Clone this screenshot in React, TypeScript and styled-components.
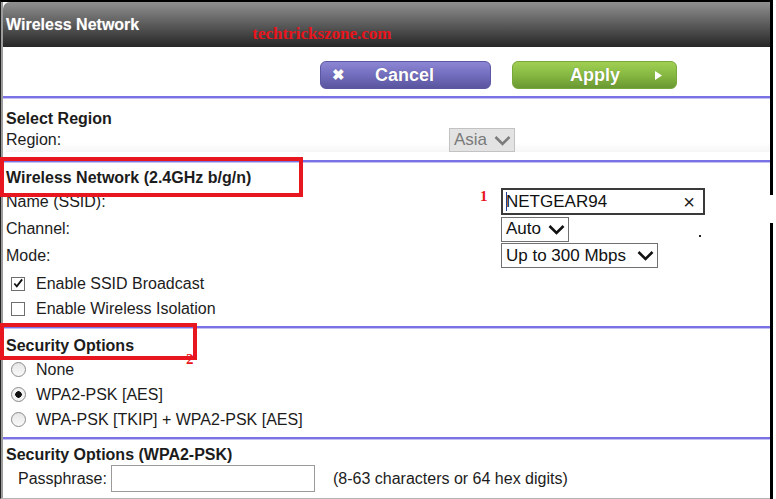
import styled, { createGlobalStyle } from "styled-components";

const GlobalStyle = createGlobalStyle`
  html, body {
    margin: 0;
    padding: 0;
    background: #ffffff;
  }
  body {
    font-family: "Liberation Sans", Arial, sans-serif;
    color: #1c1c1c;
  }
`;

const ChevronDown = ({ color = "#111" }: { color?: string }) => (
  <svg width="17" height="11" viewBox="0 0 17 11">
    <path d="M1.5 2 L8.5 9 L15.5 2" fill="none" stroke={color} strokeWidth="2.6" />
  </svg>
);

const CheckMark = () => (
  <svg width="13" height="13" viewBox="0 0 13 13">
    <path d="M2.5 6.5 L5.2 9.5 L11 2" fill="none" stroke="#111" strokeWidth="2" />
  </svg>
);

interface SelectBoxProps {
  value: string;
  disabled?: boolean;
  gap?: number;
}
const SelectBox = ({ value, disabled, gap = 7 }: SelectBoxProps) => (
  <Select $disabled={disabled} $gap={gap}>
    <span>{value}</span>
    <ChevronDown color={disabled ? "#7c7c7c" : "#111"} />
  </Select>
);

const App = () => {
  return (
    <Page>
      <GlobalStyle />
      <Frame>
        <TitleBar>
          <Title>Wireless Network</Title>
          <Watermark>techtrickszone.com</Watermark>
        </TitleBar>

        <ButtonRow>
          <CancelButton>
            <span className="icon">✖</span>
            <span>Cancel</span>
          </CancelButton>
          <ApplyButton>
            <span>Apply</span>
            <svg width="7" height="9" viewBox="0 0 7 9">
              <path d="M0 0 L7 4.5 L0 9 Z" fill="#fff" />
            </svg>
          </ApplyButton>
        </ButtonRow>
        <Divider />

        <Section $top={10} $bottom={8}>
          <Heading $shift={1}>Select Region</Heading>
          <RegionRow>
            <Label>Region:</Label>
            <SelectBox value="Asia" disabled />
          </RegionRow>
        </Section>
        <Divider />

        <Section $top={4} $bottom={5}>
          <Heading $height={22} $shift={1}>
            Wireless Network (2.4GHz b/g/n)
            <Callout $width={303} $height={40} $top={-9} />
            <Marker $left={474} $top={23}>1</Marker>
          </Heading>
          <FieldGrid>
            <Label>Name (SSID):</Label>
            <TextInput $width={204} $height={27} $dark>
              <Caret />
              <span>NETGEAR94</span>
              <ClearIcon>×</ClearIcon>
            </TextInput>
            <Label>Channel:</Label>
            <Control>
              <SelectBox value="Auto" />
              <Speck />
            </Control>
            <Label>Mode:</Label>
            <Control>
              <SelectBox value="Up to 300 Mbps" gap={11} />
            </Control>
          </FieldGrid>
          <OptionRow $top={3}>
            <CheckBox>
              <CheckMark />
            </CheckBox>
            Enable SSID Broadcast
          </OptionRow>
          <OptionRow>
            <CheckBox />
            Enable Wireless Isolation
          </OptionRow>
        </Section>
        <Divider />

        <Section $top={6} $bottom={5}>
          <Heading $height={22} $shift={1}>
            Security Options
            <Marker $left={180} $top={18}>2</Marker>
            <Callout $width={197} $height={37} $top={-11} />
          </Heading>
          <OptionRow $top={1}>
            <Radio />
            None
          </OptionRow>
          <OptionRow>
            <Radio $checked />
            WPA2-PSK [AES]
          </OptionRow>
          <OptionRow>
            <Radio />
            WPA-PSK [TKIP] + WPA2-PSK [AES]
          </OptionRow>
        </Section>
        <Divider />

        <Section $top={6} $bottom={5}>
          <Heading>Security Options (WPA2-PSK)</Heading>
          <PassRow>
            <span>Passphrase:</span>
            <TextInput $width={204} $height={27} />
            <Hint>(8-63 characters or 64 hex digits)</Hint>
          </PassRow>
        </Section>
      </Frame>
    </Page>
  );
};
export default App;

const Page = styled.div`
  width: 776px;
  height: 499px;
  box-sizing: border-box;
  overflow: hidden;
  padding-right: 3px;
  background:
    linear-gradient(#000, #000) right 3px top 0 / 3px 195px no-repeat,
    linear-gradient(#000, #000) right 3px top 223px / 3px 100% no-repeat,
    #fff;
`;

const Frame = styled.div`
  width: 770px;
  height: 499px;
  box-sizing: border-box;
  border-top: 2px solid #000;
  border-left: 1px solid #222;
  box-shadow: inset 2px 0 0 #9c9c9c;
  border-bottom: 1px solid #b5b5b5;
  margin-bottom: 1px;
  display: flex;
  flex-direction: column;
`;

const TitleBar = styled.div`
  height: 45px;
  margin-left: 2px;
  border-top-left-radius: 7px;
  background: linear-gradient(to bottom, #909090 0%, #606060 45%, #262626 100%);
  display: flex;
  align-items: flex-start;
  flex-shrink: 0;
`;

const Title = styled.div`
  color: #fff;
  font-weight: bold;
  font-size: 16px;
  line-height: 20px;
  padding: 13px 0 0 3px;
  text-shadow: 0 0 1px rgba(255, 255, 255, 0.4);
`;

const Watermark = styled.div`
  color: #e8141c;
  font-family: "Liberation Serif", "Times New Roman", serif;
  font-weight: bold;
  font-size: 17px;
  line-height: 20px;
  margin: 22px 0 0 113px;
`;

const ButtonRow = styled.div`
  height: 49px;
  box-sizing: border-box;
  padding: 14px 0 0 319px;
  display: flex;
  gap: 21px;
  flex-shrink: 0;
`;

const BaseButton = styled.div`
  height: 28px;
  box-sizing: border-box;
  border-radius: 6px;
  display: flex;
  align-items: center;
  color: #fff;
  font-weight: bold;
  font-size: 18px;
  text-shadow: 0 0 1px rgba(0, 0, 0, 0.3);
`;

const CancelButton = styled(BaseButton)`
  width: 171px;
  padding-left: 11px;
  gap: 30px;
  background: linear-gradient(to bottom, #8c86d4 0%, #736dbe 50%, #5a559e 100%);
  border: 1px solid #5c57a3;
  .icon {
    font-size: 15px;
  }
`;

const ApplyButton = styled(BaseButton)`
  width: 165px;
  padding-left: 57px;
  gap: 35px;
  background: linear-gradient(to bottom, #a0cf52 0%, #86b842 50%, #6a9832 100%);
  border: 1px solid #78a83a;
`;

const Divider = styled.div`
  height: 2px;
  margin-left: 2px;
  background: #7a72e4;
  box-shadow: 0 1px 0 #c4c0f2;
  flex-shrink: 0;
`;

const Section = styled.div<{ $top: number; $bottom: number }>`
  padding: ${(p) => p.$top}px 0 ${(p) => p.$bottom}px 5px;
  display: flex;
  flex-direction: column;
  flex-shrink: 0;
`;

const Heading = styled.div<{ $height?: number; $shift?: number }>`
  position: relative;
  font-weight: bold;
  font-size: 16px;
  height: ${(p) => p.$height ?? 20}px;
  line-height: ${(p) => (p.$height ?? 20) + 2 * (p.$shift ?? 0)}px;
`;

const Callout = styled.div<{ $width: number; $height: number; $top: number }>`
  position: absolute;
  left: -6px;
  top: ${(p) => p.$top}px;
  width: ${(p) => p.$width}px;
  height: ${(p) => p.$height}px;
  box-sizing: border-box;
  border: 4px solid #e8161f;
  pointer-events: none;
`;

const Marker = styled.span<{ $left: number; $top: number }>`
  position: absolute;
  left: ${(p) => p.$left}px;
  top: ${(p) => p.$top}px;
  color: #e8141c;
  font-family: "Liberation Serif", "Times New Roman", serif;
  font-weight: bold;
  font-size: 15px;
  line-height: 15px;
`;

const Label = styled.span`
  font-size: 16px;
  line-height: 20px;
`;

const RegionRow = styled.div`
  height: 24px;
  display: grid;
  grid-template-columns: 443px auto;
  align-items: center;
  background: linear-gradient(to bottom, transparent 60%, #f6f6f6 100%);
`;

const Select = styled.div<{ $disabled?: boolean; $gap: number }>`
  display: inline-flex;
  align-items: center;
  gap: ${(p) => p.$gap}px;
  height: ${(p) => (p.$disabled ? 24 : 25)}px;
  box-sizing: border-box;
  padding: 0 3px 0 4px;
  font-size: 17px;
  background: ${(p) => (p.$disabled ? "#e3e3e3" : "#fff")};
  color: ${(p) => (p.$disabled ? "#7a7a7a" : "#111")};
  border: 1px solid ${(p) => (p.$disabled ? "#c2c2c2" : "#707070")};
  width: max-content;
`;

const FieldGrid = styled.div`
  display: grid;
  grid-template-columns: 495px auto;
  grid-template-rows: 27px 26px 25px;
  row-gap: 1px;
  align-items: center;
`;

const Control = styled.div`
  position: relative;
  display: flex;
  align-items: center;
`;

const Speck = styled.span`
  position: absolute;
  left: 198px;
  top: 18px;
  width: 2px;
  height: 2px;
  background: #222;
`;

const TextInput = styled.div<{ $width: number; $height: number; $dark?: boolean }>`
  position: relative;
  width: ${(p) => p.$width}px;
  height: ${(p) => p.$height}px;
  box-sizing: border-box;
  border: ${(p) => (p.$dark ? "2px solid #3a3a3a" : "1px solid #9a9a9a")};
  background: #fff;
  display: flex;
  align-items: center;
  padding-left: 3px;
  font-size: 17px;
  color: #111;
`;

const Caret = styled.span`
  width: 1px;
  height: 19px;
  background: #1b3f9c;
  margin-right: -1px;
`;

const ClearIcon = styled.span`
  margin-left: auto;
  margin-right: 8px;
  font-size: 20px;
  line-height: 20px;
  color: #222;
`;

const OptionRow = styled.div<{ $top?: number }>`
  display: flex;
  align-items: center;
  gap: 10px;
  height: 25px;
  margin-top: ${(p) => p.$top ?? 0}px;
  padding-left: 5px;
  font-size: 16px;
`;

const CheckBox = styled.span`
  width: 14px;
  height: 14px;
  box-sizing: border-box;
  border: 1px solid #6e6e6e;
  background: #fff;
  display: flex;
  align-items: center;
  justify-content: center;
  margin-right: 1px;
`;

const Radio = styled.span<{ $checked?: boolean }>`
  width: 15px;
  height: 15px;
  box-sizing: border-box;
  border-radius: 50%;
  border: 1px solid #8a8a8a;
  background: ${(p) =>
    p.$checked
      ? "radial-gradient(circle, #111 0 3px, #f2f2f2 3.5px)"
      : "linear-gradient(#e6e6e6, #fafafa)"};
`;

const PassRow = styled.div`
  display: flex;
  align-items: center;
  height: 27px;
  padding-left: 12px;
  font-size: 16px;
  span:first-child {
    width: 93px;
  }
`;

const Hint = styled.span`
  margin-left: 18px;
`;
